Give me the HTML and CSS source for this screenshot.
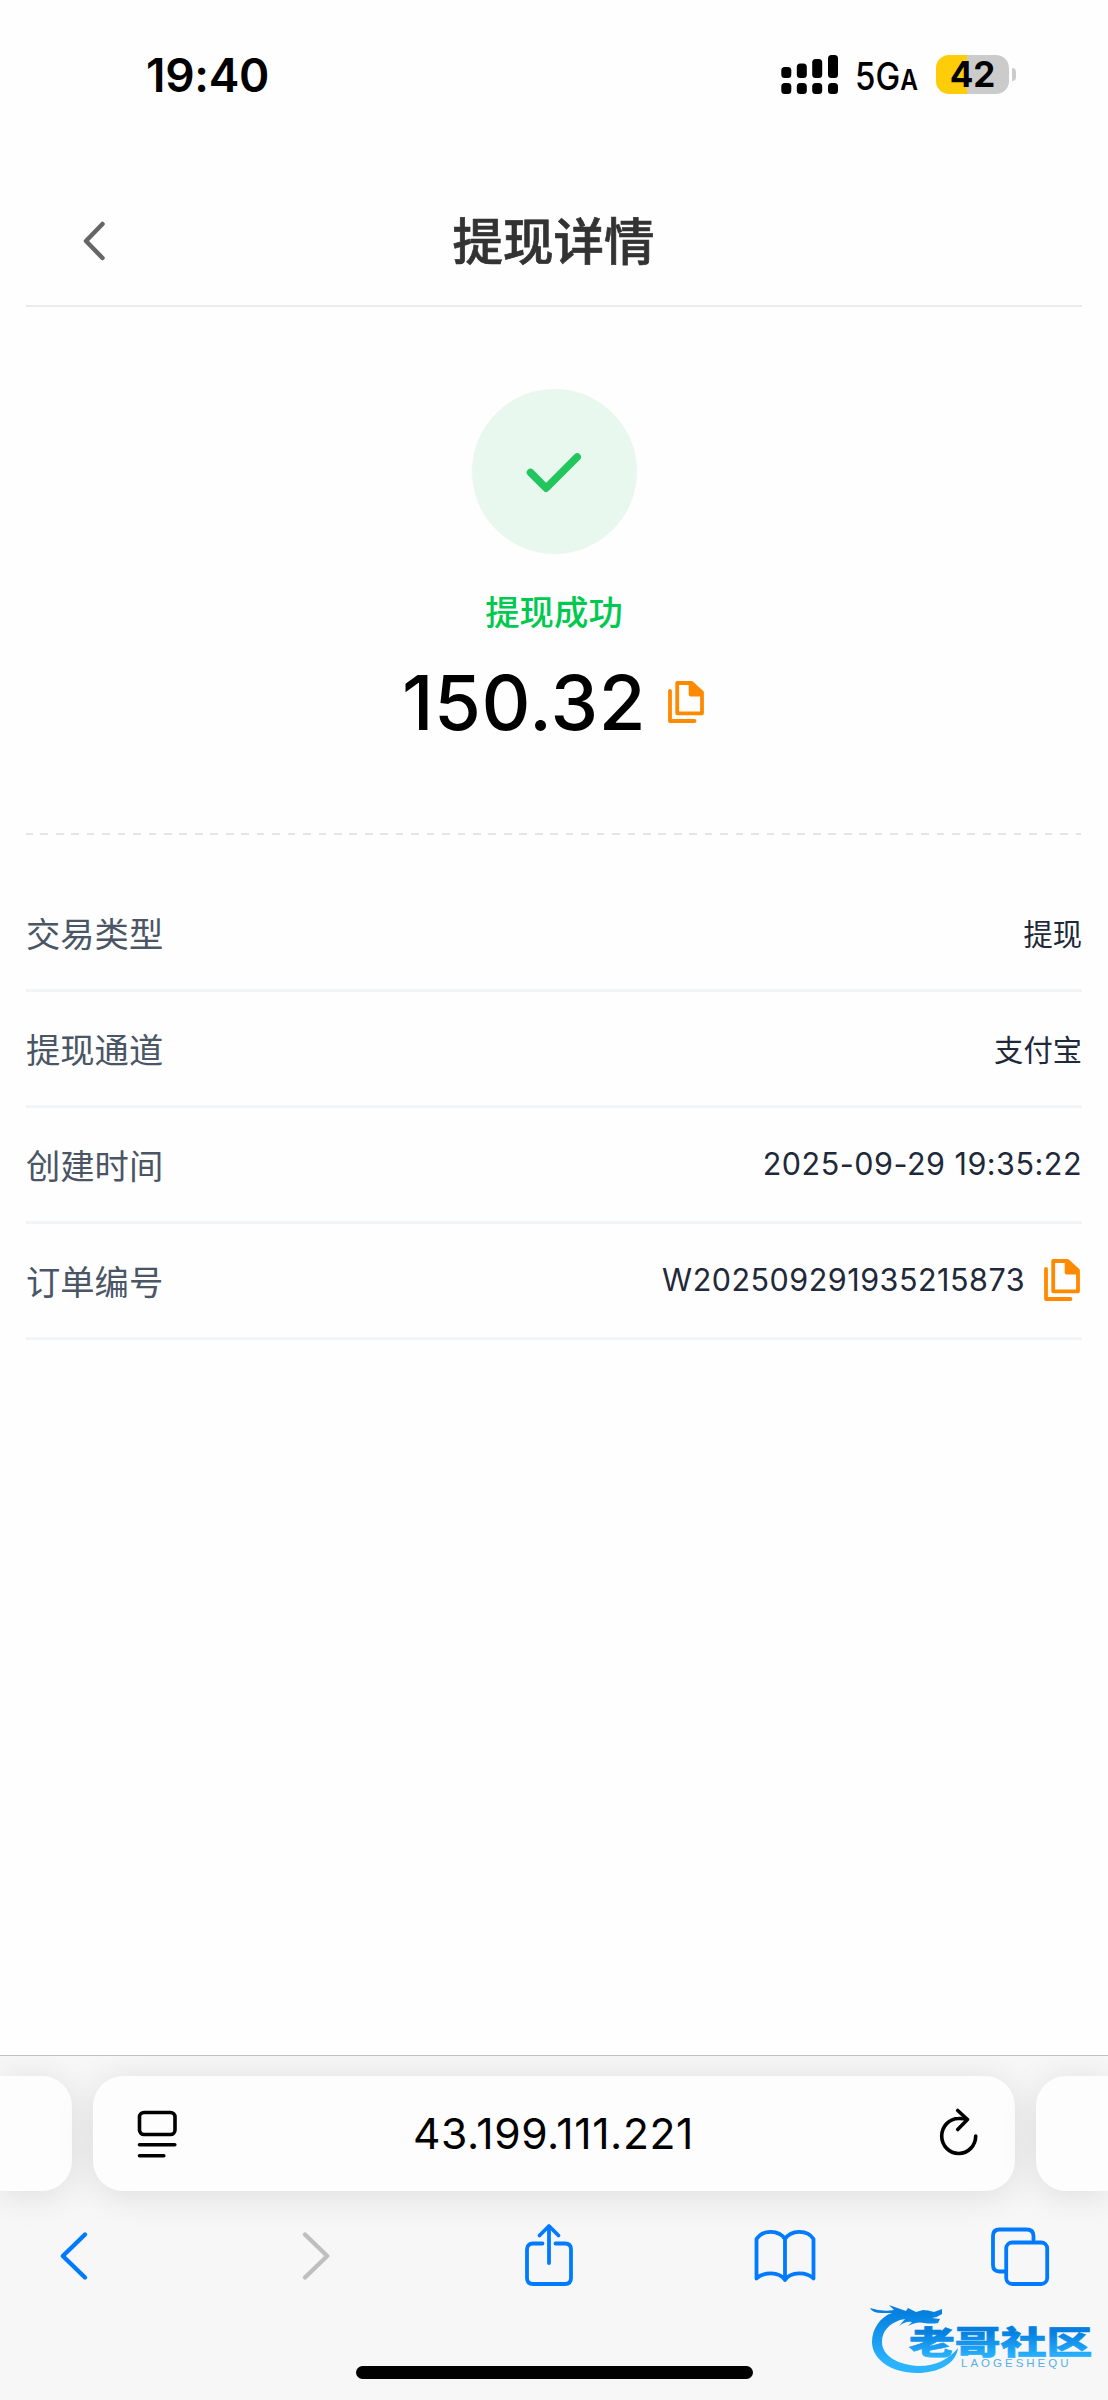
FILE: index.html
```html
<!DOCTYPE html>
<html lang="zh-CN">
<head>
    <meta charset="UTF-8">
    <meta name="viewport" content="width=device-width, initial-scale=1.0">
    <title>提现详情</title>
    <link rel="stylesheet" href="styles.css">
</head>
<body>
    <!-- Barra de estado -->
    <div class="status-bar">
        <span class="time">19:40</span>
        <div class="status-icons">
            <svg class="signal" width="58" height="40" viewBox="0 0 58 40">
                <rect x="0.3" y="12" width="10" height="11" rx="3.5"/>
                <rect x="15.8" y="8.5" width="10" height="14.5" rx="3.5"/>
                <rect x="31.2" y="4" width="10" height="19" rx="3.5"/>
                <rect x="47" y="0" width="10" height="23" rx="3.5"/>
                <rect x="0.3" y="28" width="10" height="11" rx="3.5"/>
                <rect x="15.8" y="28" width="10" height="11" rx="3.5"/>
                <rect x="31.2" y="28" width="10" height="11" rx="3.5"/>
                <rect x="47" y="28" width="10" height="11" rx="3.5"/>
            </svg>
            <div class="network"><span>5G<small>A</small></span></div>
            <div class="battery">42</div>
            <div class="battery-tip"></div>
        </div>
    </div>

    <header class="header">
        <svg class="back" width="24" height="40" viewBox="0 0 24 40">
            <path d="M19.5 4 3 21 19.5 38"/>
        </svg>
        <h1>提现详情</h1>
    </header>

    <main class="content">
        <section class="result">
            <div class="circle">
                <svg width="56" height="44" viewBox="0 0 56 44">
                    <path d="M4.5 22.5 20.1 38.2 51.2 7"/>
                </svg>
            </div>
            <p class="result-text">提现成功</p>
            <div class="amount">
                <span>150.32</span>
                <svg class="copy" width="36" height="42" viewBox="0 0 36 42">
                    <path class="line" d="M2 10V40H26.5M9.2 2H23.5L34 11.5V32.3H9.2Z"/>
                    <path class="fold" d="M20.7 1H24.5L35 11V15.5H22.7Q20.7 15.5 20.7 13.5Z"/>
                </svg>
            </div>
        </section>

        <!-- Datos de la orden -->
        <ul class="details">
            <li><span class="label">交易类型</span><span class="value">提现</span></li>
            <li><span class="label">提现通道</span><span class="value">支付宝</span></li>
            <li><span class="label">创建时间</span><span class="value date">2025-09-29 19:35:22</span></li>
            <li>
                <span class="label">订单编号</span>
                <span class="value order">W202509291935215873</span>
                <svg class="copy" width="36" height="42" viewBox="0 0 36 42">
                    <path class="line" d="M2 10V40H26.5M9.2 2H23.5L34 11.5V32.3H9.2Z"/>
                    <path class="fold" d="M20.7 1H24.5L35 11V15.5H22.7Q20.7 15.5 20.7 13.5Z"/>
                </svg>
            </li>
        </ul>
    </main>

    <!-- Barra del navegador -->
    <footer class="browser">
        <div class="tabs">
            <div class="pill"></div>
            <div class="pill address">
                <svg width="40" height="48" viewBox="0 0 40 48">
                    <rect x="1.5" y="2.5" width="35.5" height="22" rx="4.5"/>
                    <path d="M1.5 34.8H36.8M1.5 45.8H25.8"/>
                </svg>
                <span class="url">43.199.111.221</span>
                <svg width="40" height="48" viewBox="0 0 40 48">
                    <path d="M36.7 26A17 17.5 0 1 1 19.7 8.5Q24 8.3 28.5 9.5M18.7 0.5 28.5 9.5 18.7 19.5"/>
                </svg>
            </div>
            <div class="pill"></div>
        </div>
        <nav class="toolbar">
            <svg width="28" height="62" viewBox="0 0 28 62">
                <path class="thick" d="M25 12.5 2.8 34 25 55.5"/>
            </svg>
            <svg class="disabled" width="28" height="62" viewBox="0 0 28 62">
                <path class="thick" d="M3 12.5 25.2 34 3 55.5"/>
            </svg>
            <svg width="50" height="66" viewBox="0 0 50 66">
                <path d="M18.5 21.5H9Q3 21.5 3 27.5V56Q3 62 9 62H41Q47 62 47 56V27.5Q47 21.5 41 21.5H31.5M25 41V4.5M15.5 13.5 25 4 34.5 13.5"/>
            </svg>
            <svg width="62" height="66" viewBox="0 0 62 66">
                <path d="M31 17C25 8 9 7 2.5 17V56.5C9 50 25 49 31 58C37 49 53 50 59.5 56.5V17C53 7 37 8 31 17V58"/>
            </svg>
            <svg width="60" height="66" viewBox="0 0 60 66">
                <path d="M45.5 18V14Q45.5 7.5 38.5 7.5H11.5Q5 7.5 5 14V43Q5 49.5 11.5 49.5H16"/>
                <rect x="18.2" y="20.5" width="41" height="41.5" rx="6"/>
            </svg>
        </nav>
        <div class="home-indicator"></div>

        <svg class="watermark" width="226" height="84" viewBox="0 0 226 84">
            <defs>
                <linearGradient id="blue" gradientUnits="userSpaceOnUse" x1="0" y1="14" x2="0" y2="64">
                    <stop offset="0" stop-color="#0580e0"/>
                    <stop offset="1" stop-color="#2bb4ff"/>
                </linearGradient>
                <linearGradient id="blueText" x1="0" y1="0" x2="0" y2="1">
                    <stop offset="0.25" stop-color="#0580e0"/>
                    <stop offset="0.9" stop-color="#2bb4ff"/>
                </linearGradient>
            </defs>
            <path fill="url(#blue)" d="M22 14C10 18 2 30 2 43C2 60 21 74 47 74C68 74 86 65 88 49C79 60 66 67 49 67C28 66 12 57 12 43C12 32 19 25 30 21L35 20L29 27Q36 22 42 23L38 27Q47 22 54 24Q62 25 68 24L70 20L62 19Q68 18 72 15V10L64 13Q58 11 53 11L46 13L38 9L36 12L19 6L24 11Q12 13 0 9Q2 14 12 14Z"/>
            <text class="mark" transform="translate(39 54.5) scale(1.31 0.92)" fill="url(#blueText)" stroke="url(#blueText)">老哥社区</text>
            <text class="mark-sub" x="91" y="67.5">LAOGESHEQU</text>
        </svg>
    </footer>
</body>
</html>
```
FILE: styles.css
```css
* {
    box-sizing: border-box;
}

body {
    font-family: Inter, "Noto Sans CJK SC", sans-serif;
    background-color: #fefefe;
    margin: 0;
    height: 2400px;
    display: flex;
    flex-direction: column;
    overflow: hidden;
}

svg {
    display: block;
    flex: none;
    overflow: visible;
}

/* Barra de estado */
.status-bar {
    height: 175px;
    display: flex;
    justify-content: space-between;
    align-items: flex-start;
    padding: 55px 92px 0 146px;
}

.time {
    font-size: 46px;
    font-weight: 600;
    line-height: 41px;
    letter-spacing: -0.3px;
}

.status-icons {
    display: flex;
    align-items: flex-start;
}

.network {
    width: 97px;
    padding-left: 16px;
    font-size: 38px;
    font-weight: 500;
    line-height: 43px;
    white-space: nowrap;
}

.network span {
    display: inline-block;
    transform: scaleX(0.87);
    transform-origin: left;
}

.network small {
    font-size: 28px;
    font-weight: 600;
}

.battery {
    width: 73px;
    height: 39px;
    border-radius: 13px;
    background: linear-gradient(to right, #ffcc0a 31px, #cbcbcb 31px);
    font-size: 35px;
    font-weight: 700;
    line-height: 39px;
    text-align: center;
}

.battery-tip {
    width: 4px;
    height: 13px;
    margin: 13px 0 0 3px;
    border-radius: 0 6px 6px 0;
    background-color: #cbcbcb;
}

.header {
    height: 132px;
    margin: 0 26px;
    display: flex;
    align-items: center;
    border-bottom: 2px solid #ebebeb;
}

.back {
    margin-left: 57px;
    fill: none;
    stroke: #666;
    stroke-width: 4.5;
    stroke-linecap: round;
    stroke-linejoin: round;
}

.header h1 {
    flex: 1;
    margin: 4px 82px 0 0;
    font-size: 50.5px;
    font-weight: 500;
    line-height: 60px;
    text-align: center;
    color: #333;
    -webkit-text-stroke: 0.7px #333;
}

.content {
    flex: 1;
    padding: 0 26px;
}

.result {
    height: 528px;
    padding-top: 82px;
    display: flex;
    flex-direction: column;
    align-items: center;
    background: repeating-linear-gradient(to right, #e3e5ea 0 7.7px, transparent 7.7px 15.45px) -1px bottom / 100% 2px no-repeat;
}

.circle {
    width: 165px;
    height: 165px;
    border-radius: 50%;
    background-color: #e8f8ee;
    display: flex;
    align-items: center;
    justify-content: center;
}

.circle svg {
    fill: none;
    stroke: #22c55e;
    stroke-width: 7.5;
    stroke-linecap: round;
    stroke-linejoin: round;
}

.result-text {
    margin: 34px 0 0;
    font-size: 34.3px;
    font-weight: 500;
    line-height: 50px;
    letter-spacing: 0.1px;
    color: #00c950;
}

.amount {
    display: flex;
    align-items: center;
    gap: 22px;
    margin: 16px 2px 0 0;
    font-size: 76px;
    font-weight: 500;
    line-height: 96px;
    letter-spacing: 0.5px;
}

.copy {
    fill: none;
    stroke: #ff8a00;
    stroke-width: 3.8;
    stroke-linecap: round;
    stroke-linejoin: round;
}

.copy .fold {
    fill: #ff8a00;
    stroke: none;
}

.details {
    margin: 0;
    padding: 41px 0 0;
    list-style: none;
}

.details li {
    height: 116px;
    display: flex;
    align-items: center;
    padding-bottom: 2px;
    border-bottom: 3px solid #f3f4f6;
}

.label {
    flex: 1;
    font-size: 34.3px;
    color: #4a5565;
}

.value {
    font-size: 29.3px;
    color: #1e2939;
}

.date,
.order {
    font-size: 30.5px;
    letter-spacing: 0.5px;
}

.details .copy {
    margin: 0 2px 0 19px;
}

/* Barra del navegador */
.browser {
    position: relative;
    height: 345px;
    border-top: 1px solid #c0c2c1;
    background-color: #f7f7f7;
    overflow: hidden;
}

.tabs {
    display: grid;
    grid-template-columns: 72px 922px 72px;
    gap: 21px;
    padding-top: 20px;
}

.pill {
    height: 115px;
    border-radius: 30px;
    background-color: #fdfdfd;
    box-shadow: 0 4px 36px rgba(0, 0, 0, 0.11);
}

.pill:first-child {
    border-radius: 0 30px 30px 0;
}

.pill:last-child {
    border-radius: 30px 0 0 30px;
}

.address {
    display: flex;
    align-items: center;
    justify-content: space-between;
    padding: 0 36px 0 45px;
}

.address svg {
    fill: none;
    stroke: #000;
    stroke-width: 3.6;
    stroke-linecap: round;
    stroke-linejoin: round;
}

.url {
    margin-right: 10px;
    font-size: 42.6px;
    letter-spacing: 0.6px;
}

.toolbar {
    height: 66px;
    margin-top: 31px;
    padding-left: 60px;
    display: grid;
    grid-template-columns: 242px 222px 229.5px 234px 60px;
    align-items: start;
}

.toolbar svg {
    fill: none;
    stroke: #007aff;
    stroke-width: 3.8;
    stroke-linecap: round;
    stroke-linejoin: round;
}

.toolbar .thick {
    stroke-width: 4.4;
}

.toolbar .disabled {
    stroke: #bfbfbf;
}

.home-indicator {
    width: 397px;
    height: 13px;
    margin: 78px auto 0;
    border-radius: 7px;
    background-color: #000;
}

/* Marca de agua */
.watermark {
    position: absolute;
    left: 870px;
    top: 243px;
}

.mark {
    font-size: 35px;
    font-weight: 900;
    stroke-width: 0.8;
}

.mark-sub {
    font-family: "Liberation Sans", sans-serif;
    font-size: 11.5px;
    letter-spacing: 3px;
    fill: #58aee9;
}
```
